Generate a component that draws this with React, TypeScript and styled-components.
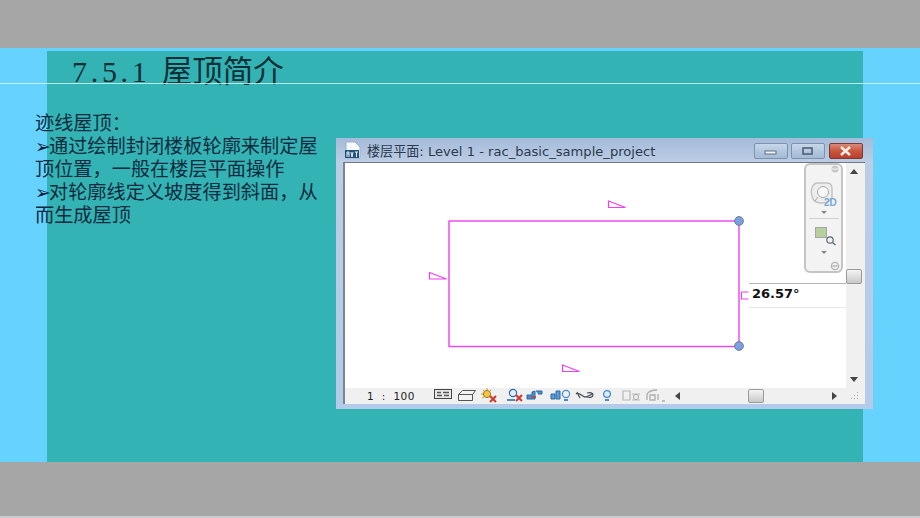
import React from "react";
import styled, { createGlobalStyle } from "styled-components";

const GlobalStyle = createGlobalStyle`
  html, body {
    margin: 0;
    padding: 0;
    width: 920px;
    height: 518px;
    overflow: hidden;
    background: #a6a6a6;
  }
`;

const Page = styled.div`
  position: relative;
  width: 920px;
  height: 518px;
  display: flex;
  flex-direction: column;
  font-family: "Noto Sans CJK SC", "Liberation Serif", serif;
`;

const Band = styled.div<{ $height: number }>`
  height: ${(p) => p.$height}px;
  flex: none;
  box-sizing: border-box;
  background: #a6a6a6;
`;

const BottomBand = styled(Band)`
  border-bottom: 2px solid #c9cdcf;
`;

const Stage = styled.div`
  flex: 1;
  min-height: 0;
  background: #66d3ff;
  padding: 3px 57px 0 47px;
  display: flex;
`;

const Panel = styled.div`
  flex: none;
  width: 816px;
  min-width: 0;
  background: #34b3b4;
`;

const Rule = styled.div`
  position: absolute;
  left: 0;
  right: 0;
  top: 83px;
  height: 1px;
  background: rgba(225, 245, 245, 0.8);
`;

const Title = styled.h1`
  margin: 0;
  padding: 0 0 0 25px;
  height: 40px;
  font-weight: 400;
  font-size: 30.5px;
  line-height: 37px;
  color: #0d2f36;
  white-space: pre;
`;

const TitleNumber = styled.span`
  font-family: "Liberation Serif", serif;
  letter-spacing: 3.7px;
  font-size: 30px;
`;

const Body = styled.div`
  display: flex;
  margin-left: -12px;
`;

const Notes = styled.div`
  width: 301px;
  flex: none;
  padding-top: 20px;
  font-size: 19.2px;
  color: #0d2b40;
  white-space: nowrap;
`;

const NoteLine = styled.div`
  height: 23px;
  line-height: 23px;
  overflow: visible;
`;

const Bullet = styled.span`
  font-family: "DejaVu Sans", sans-serif;
  font-size: 19px;
  line-height: 1px;
  display: inline-block;
  width: 14px;
  color: #06203a;
`;

const Win = styled.div`
  flex: none;
  width: 537px;
  height: 271px;
  margin-top: 47px;
  box-sizing: border-box;
  padding: 0 8px 5px 7px;
  background: linear-gradient(180deg, #a4bbda 0, #bccde4 24px, #b3cbe9 100%);
  display: flex;
  flex-direction: column;
`;

const TitleBar = styled.div`
  height: 24px;
  flex: none;
  display: flex;
  align-items: center;
  gap: 5px;
  margin-left: 1px;
  font-family: "DejaVu Sans", "Noto Sans CJK SC", sans-serif;
  font-size: 13.1px;
  color: #2c3a4d;
`;

const WinTitle = styled.span`
  flex: 1;
  white-space: nowrap;
`;

const WinButtons = styled.div`
  display: flex;
  gap: 3px;
  margin-right: 2px;
  margin-top: 1px;
`;

const WinButton = styled.div<{ $close?: boolean }>`
  width: 34px;
  height: 16px;
  box-sizing: border-box;
  margin-left: ${(p) => (p.$close ? 1 : 0)}px;
  border: 1px solid ${(p) => (p.$close ? "#7c3a36" : "#7d92ad")};
  border-radius: 2px;
  background: ${(p) =>
    p.$close
      ? "linear-gradient(#d98a78 0%, #c9563f 50%, #b8402c 100%)"
      : "linear-gradient(#c9d8ea 0%, #b3c7de 50%, #a4bbd6 100%)"};
  display: flex;
  align-items: center;
  justify-content: center;
`;

const Client = styled.div`
  flex: 1;
  min-height: 0;
  display: flex;
  flex-direction: column;
  border-left: 2px solid #7a8590;
  border-top: 1px solid #6f7a85;
`;

const ClientRow = styled.div`
  flex: 1;
  min-height: 0;
  display: flex;
`;

const Canvas = styled.div`
  position: relative;
  width: 501px;
  height: 225px;
  flex: none;
  background: #fff;
`;

const NavBar = styled.div`
  position: absolute;
  left: 459px;
  top: 0;
  width: 39px;
  height: 110px;
  box-sizing: border-box;
  border: 2px solid #c4c4c4;
  border-radius: 6px;
  background: #f3f3f3;
`;

const AngleBox = styled.div`
  position: absolute;
  left: 404px;
  top: 120px;
  width: 97px;
  height: 25px;
  box-sizing: border-box;
  border-top: 1px solid #b5b5b5;
  border-bottom: 1px solid #e8e8e8;
  background: #fff;
  padding-left: 3px;
  font-family: "DejaVu Sans", sans-serif;
  font-size: 13px;
  font-weight: 700;
  line-height: 19px;
  color: #111;
`;

const VScroll = styled.div`
  flex: 1;
  background: #f0f0f0;
  display: flex;
  flex-direction: column;
  align-items: flex-start;
  padding-top: 6px;
  box-sizing: border-box;
`;

const ScrollArrow = styled.svg<{ $top?: number; $left?: number }>`
  display: block;
  flex: none;
  margin-top: ${(p) => p.$top ?? 0}px;
  margin-left: ${(p) => p.$left ?? 0}px;
`;

const Thumb = styled.div<{ $vertical?: boolean; $top?: number; $left?: number }>`
  flex: none;
  width: 16px;
  height: ${(p) => (p.$vertical ? 15 : 14)}px;
  box-sizing: border-box;
  margin-top: ${(p) => p.$top ?? 0}px;
  margin-left: ${(p) => p.$left ?? 0}px;
  border: 1px solid #9a9a9a;
  border-radius: 2px;
  background: linear-gradient(#f4f4f4, #c8c8c8);
`;

const StatusBar = styled.div`
  height: 16px;
  flex: none;
  background: #f0f0f0;
  display: flex;
  align-items: center;
`;

const Scale = styled.span`
  margin-left: 22px;
  width: 67px;
  flex: none;
  font-family: "DejaVu Sans", sans-serif;
  font-size: 10.5px;
  word-spacing: 4px;
  letter-spacing: 0.4px;
  color: #222;
  white-space: pre;
`;

const DRAWING_MAGENTA = "#f040f0";

const Wedge = ({ x, y }: { x: number; y: number }) => (
  <path
    d={`M${x} ${y}L${x + 17} ${y + 6.5}H${x}Z`}
    fill="#fff"
    stroke={DRAWING_MAGENTA}
    strokeWidth="1.2"
  />
);

const Sketch = () => (
  <svg width="501" height="225" style={{ display: "block" }}>
    <rect x="104" y="58" width="290" height="125.5" fill="none" stroke="#f040f0" strokeWidth="1.4" />
    <Wedge x={263.5} y={38} />
    <Wedge x={84.5} y={109.5} />
    <Wedge x={217.5} y={202} />
    <path d="M396.5 129h7M396.5 129v7h7" fill="none" stroke={DRAWING_MAGENTA} strokeWidth="1.2" />
    <circle cx="394" cy="58" r="4.4" fill="#7c9fe0" stroke="#6a7f9a" />
    <circle cx="394" cy="183" r="4.4" fill="#7c9fe0" stroke="#6a7f9a" />
  </svg>
);

const NavDrawing = () => (
  <svg width="35" height="106" style={{ display: "block" }}>
    <circle cx="29" cy="4" r="3.5" fill="#c8c8c8" />
    <path d="M26 4h6" stroke="#f3f3f3" />
    <path
      d="M6 31c-2-6 0-12 5-13h10c5 0 5 4 5 8v7c-2 3-6 5-11 5-5 0-8-2-9-7z"
      fill="#ededed"
      stroke="#c2c2c2"
      strokeWidth="1.4"
    />
    <circle cx="17" cy="27" r="5.5" fill="#f7f7f7" stroke="#a8a8a8" />
    <path d="M12 32l-3 4" stroke="#a8a8a8" />
    <text x="18" y="41" fontFamily="Liberation Sans, sans-serif" fontSize="10" fontWeight="700" fill="#78a8d8">
      2D
    </text>
    <path d="M15 46h6l-3 3z" fill="#888" />
    <path d="M3 53.5h30" stroke="#cfcfcf" />
    <rect x="9.5" y="62.5" width="11" height="10" fill="#b5d09c" stroke="#a5a5a5" />
    <circle cx="24" cy="75" r="3.2" fill="#f3f3f3" stroke="#5e6b75" strokeWidth="1.2" />
    <path d="M26.5 77.5l3 2.5" stroke="#5e6b75" strokeWidth="1.4" />
    <path d="M15 86h6l-3 3z" fill="#888" />
    <circle cx="29" cy="101" r="3.6" fill="#f3f3f3" stroke="#b5b5b5" strokeWidth="1.4" />
    <path d="M26.5 101h5" stroke="#999" />
  </svg>
);

const StatusIcons = () => (
  <svg width="232" height="16" style={{ display: "block", flex: "none" }}>
    <rect x="0.5" y="1.5" width="17" height="9" fill="#e8e8e8" stroke="#444" />
    <path d="M3 4.5h4M9 4.5h6M3 7.5h5M10 7.5h5" stroke="#555" strokeWidth="1.6" />
    <path d="M24.5 6.5l4-4h13l-3 4v6h-14zM24.5 6.5h14" fill="#f2f2f2" stroke="#555" />
    <circle cx="53" cy="6" r="3.6" fill="#f5c642" stroke="#9a7a20" />
    <path d="M53 0v2M47 6h2M49 2l1 1M57 2l-1 1M48 10l2-1" stroke="#c99b22" />
    <path d="M56 8l6 6M62 8l-6 6" stroke="#d0392b" strokeWidth="2" />
    <circle cx="79" cy="5" r="3.6" fill="#e4eefc" stroke="#2e6fb0" strokeWidth="1.2" />
    <path d="M73 12h8" stroke="#2e6fb0" strokeWidth="1.6" />
    <path d="M82 7l6 6M88 7l-6 6" stroke="#d0392b" strokeWidth="2" />
    <path d="M93 11V7h5V4l3-1v8zM102 3h6v3h-4" fill="#4b8fd0" stroke="#2a6aa8" />
    <path d="M97 9l5 0" stroke="#d0392b" strokeWidth="1.4" />
    <path d="M117 11V6h4v5zM122 11V3h4v8z" fill="#5e9ad6" stroke="#2a6aa8" />
    <circle cx="132" cy="6" r="3.6" fill="#e8f2fc" stroke="#4a8ac8" strokeWidth="1.2" />
    <path d="M130 11h4v2h-4z" fill="#4a8ac8" />
    <path d="M142 6c3-3 6 3 9 3 3 0 6-3 8-3M143 4l3 6M153 5c3-1 6 0 6 2s-3 3-6 2" fill="none" stroke="#4a5560" strokeWidth="1.3" />
    <circle cx="173" cy="6" r="3.4" fill="#dcecfc" stroke="#4a8ac8" strokeWidth="1.3" />
    <path d="M171 11h4v2h-4z" fill="#4a8ac8" />
    <path d="M189 3h7v9h-7zM198 6h8M198 12h8" fill="none" stroke="#b8b8b8" strokeWidth="1.2" />
    <circle cx="202" cy="9" r="2.6" fill="none" stroke="#a8a8a8" />
    <path d="M213 12V6c2-3 6-4 10-4M216 12V7h5v5zM224 6v6M228 13h3" fill="none" stroke="#adadad" strokeWidth="1.3" />
  </svg>
);

const Grip = () => (
  <svg width="8" height="8" style={{ display: "block", marginLeft: 14, flex: "none" }}>
    <path d="M6 0h1v1H6zM6 3h1v1H6zM6 6h1v1H6zM3 3h1v1H3zM3 6h1v1H3zM0 6h1v1H0z" fill="#a8a8a8" />
  </svg>
);

const RvtIcon = () => (
  <svg width="18" height="18" style={{ display: "block", flex: "none" }}>
    <path d="M2 1h9l5 5v11H2z" fill="#f7f9fc" stroke="#9db0c8" />
    <rect x="1" y="9" width="14" height="8" fill="#23527e" />
    <path d="M3 11v5M3 11h2v2H3M5 13v3M7 11l1 5 1-5M11 11h3M12.5 11v5" stroke="#fff" strokeWidth="0.9" fill="none" />
  </svg>
);

export default function App() {
  return (
    <Page>
      <GlobalStyle />
      <Band $height={48} />
      <Stage>
        <Panel>
          <Title>
            <TitleNumber>7.5.1 </TitleNumber>屋顶简介
          </Title>
          <Body>
            <Notes>
              <NoteLine>迹线屋顶：</NoteLine>
              <NoteLine>
                <Bullet>➢</Bullet>通过绘制封闭楼板轮廓来制定屋
              </NoteLine>
              <NoteLine>顶位置，一般在楼层平面操作</NoteLine>
              <NoteLine>
                <Bullet>➢</Bullet>对轮廓线定义坡度得到斜面，从
              </NoteLine>
              <NoteLine>而生成屋顶</NoteLine>
            </Notes>
            <Win>
              <TitleBar>
                <RvtIcon />
                <WinTitle>楼层平面: Level 1 - rac_basic_sample_project</WinTitle>
                <WinButtons>
                  <WinButton>
                    <svg width="14" height="8">
                      <rect x="1" y="4" width="11" height="3" fill="#eef2f7" stroke="#5f7288" />
                    </svg>
                  </WinButton>
                  <WinButton>
                    <svg width="14" height="10">
                      <rect x="2" y="2" width="9" height="6" fill="none" stroke="#4e6076" strokeWidth="1.6" />
                    </svg>
                  </WinButton>
                  <WinButton $close>
                    <svg width="14" height="10">
                      <path d="M2 1l9 8M11 1l-9 8" stroke="#f6eee8" strokeWidth="2.4" />
                    </svg>
                  </WinButton>
                </WinButtons>
              </TitleBar>
              <Client>
                <ClientRow>
                  <Canvas>
                    <Sketch />
                    <NavBar>
                      <NavDrawing />
                    </NavBar>
                    <AngleBox>26.57°</AngleBox>
                  </Canvas>
                  <VScroll>
                    <ScrollArrow width="8" height="5" $left={4}>
                      <path d="M0 5h8L4 0z" fill="#444" />
                    </ScrollArrow>
                    <Thumb $vertical $top={95} />
                    <ScrollArrow width="8" height="5" $left={4} $top={93}>
                      <path d="M0 0h8L4 5z" fill="#444" />
                    </ScrollArrow>
                  </VScroll>
                </ClientRow>
                <StatusBar>
                  <Scale>1 : 100</Scale>
                  <StatusIcons />
                  <ScrollArrow width="5" height="8" $left={9}>
                    <path d="M5 0v8L0 4z" fill="#444" />
                  </ScrollArrow>
                  <Thumb $left={68} />
                  <ScrollArrow width="5" height="8" $left={68}>
                    <path d="M0 0v8l5-4z" fill="#444" />
                  </ScrollArrow>
                  <Grip />
                </StatusBar>
              </Client>
            </Win>
          </Body>
        </Panel>
      </Stage>
      <BottomBand $height={56} />
      <Rule />
    </Page>
  );
}
